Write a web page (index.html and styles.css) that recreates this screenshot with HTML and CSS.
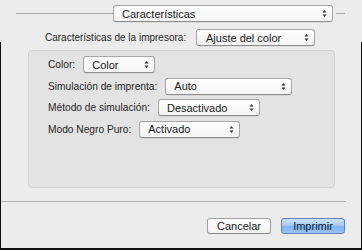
FILE: index.html
```html
<!DOCTYPE html>
<html lang="es">
<head>
<meta charset="utf-8">
<link rel="stylesheet" href="styles.css">
</head>
<body>
<div class="window">
  <div class="top-row">
    <span class="rule rule-left"></span>
    <div class="popup popup-main"><span class="ptext">Características</span><svg class="arrows" width="5" height="9" viewBox="0 0 5 9"><path d="M0.5 3.5 L2.5 1 L4.5 3.5 Z M0.5 5.5 L2.5 8 L4.5 5.5 Z" fill="#333"/></svg></div>
    <span class="rule rule-right"></span>
  </div>
  <div class="printer-row">
    <span class="label">Características de la impresora:</span>
    <div class="popup popup-printer"><span class="ptext">Ajuste del color</span><svg class="arrows" width="5" height="9" viewBox="0 0 5 9"><path d="M0.5 3.5 L2.5 1 L4.5 3.5 Z M0.5 5.5 L2.5 8 L4.5 5.5 Z" fill="#333"/></svg></div>
  </div>
  <div class="group">
    <div class="row">
      <span class="label">Color:</span>
      <div class="popup w-color"><span class="ptext">Color</span><svg class="arrows" width="5" height="9" viewBox="0 0 5 9"><path d="M0.5 3.5 L2.5 1 L4.5 3.5 Z M0.5 5.5 L2.5 8 L4.5 5.5 Z" fill="#333"/></svg></div>
    </div>
    <div class="row">
      <span class="label">Simulación de imprenta:</span>
      <div class="popup w-auto"><span class="ptext">Auto</span><svg class="arrows" width="5" height="9" viewBox="0 0 5 9"><path d="M0.5 3.5 L2.5 1 L4.5 3.5 Z M0.5 5.5 L2.5 8 L4.5 5.5 Z" fill="#333"/></svg></div>
    </div>
    <div class="row">
      <span class="label">Método de simulación:</span>
      <div class="popup w-desact"><span class="ptext">Desactivado</span><svg class="arrows" width="5" height="9" viewBox="0 0 5 9"><path d="M0.5 3.5 L2.5 1 L4.5 3.5 Z M0.5 5.5 L2.5 8 L4.5 5.5 Z" fill="#333"/></svg></div>
    </div>
    <div class="row">
      <span class="label">Modo Negro Puro:</span>
      <div class="popup w-activ"><span class="ptext">Activado</span><svg class="arrows" width="5" height="9" viewBox="0 0 5 9"><path d="M0.5 3.5 L2.5 1 L4.5 3.5 Z M0.5 5.5 L2.5 8 L4.5 5.5 Z" fill="#333"/></svg></div>
    </div>
  </div>
  <div class="separator"></div>
  <div class="buttons">
    <button class="btn">Cancelar</button>
    <button class="btn btn-default">Imprimir</button>
  </div>
</div>
</body>
</html>
```
FILE: styles.css
```css
html, body {
  margin: 0;
  padding: 0;
  background: #ececec;
}
body {
  width: 362px;
  height: 250px;
  overflow: hidden;
  font-family: "Liberation Sans", Arial, sans-serif;
  font-size: 10px;
  color: #222;
}
.window {
  position: relative;
  width: 362px;
  height: 250px;
  box-sizing: border-box;
  padding-top: 5px;
}
.window::after {
  content: "";
  position: absolute;
  left: 0;
  right: 0;
  top: 42px;
  bottom: 0;
  border-left: 1px solid #111;
  border-right: 1px solid #111;
  border-bottom: 2px solid #111;
  pointer-events: none;
}
.top-row {
  display: flex;
  align-items: center;
  height: 17px;
}
.rule {
  height: 1px;
  background: #a9a9a9;
}
.rule-left {
  margin-left: 16px;
  width: 97px;
}
.rule-right {
  margin-left: 3px;
  width: 9px;
}
.popup {
  box-sizing: border-box;
  height: 17px;
  display: flex;
  align-items: center;
  justify-content: space-between;
  padding: 0 5px 0 8px;
  background: linear-gradient(#ffffff, #f4f4f4);
  border: 1px solid #a6a6a6;
  border-bottom-color: #8e8e8e;
  border-radius: 3px;
  box-shadow: 0 0.5px 0.5px rgba(0,0,0,0.12);
  font-size: 11px;
  color: #1a1a1a;
}
.ptext {
  white-space: nowrap;
}
.arrows {
  flex: none;
}
.popup-main {
  width: 220px;
}
.printer-row {
  display: flex;
  align-items: center;
  margin-top: 7px;
  height: 17px;
}
.printer-row .label {
  margin-left: 45px;
  width: 151px;
}
.popup-printer {
  width: 119px;
  padding-left: 9px;
}
.label {
  white-space: nowrap;
  color: #262626;
}
.group {
  box-sizing: border-box;
  margin: 4px 0 0 28px;
  width: 307px;
  height: 138px;
  background: #e3e3e3;
  border: 1px solid #d2d2d2;
  border-radius: 4px;
  padding: 5px 0 0 19px;
  display: flex;
  flex-direction: column;
  gap: 4.5px;
}
.row {
  display: flex;
  align-items: center;
  height: 17px;
}
.row .label {
  font-size: 10.2px;
  margin-right: 8px;
}
.w-color { width: 72px; }
.w-auto { width: 127px; }
.w-desact { width: 102px; }
.w-activ { width: 101px; }
.separator {
  margin-top: 13px;
  width: 346px;
  height: 1px;
  background: #b0b0b0;
}
.buttons {
  display: flex;
  justify-content: flex-end;
  gap: 10px;
  margin-top: 16px;
  padding-right: 17px;
}
.btn {
  box-sizing: border-box;
  width: 64px;
  height: 16px;
  padding: 0;
  font-family: "Liberation Sans", Arial, sans-serif;
  font-size: 11px;
  color: #1a1a1a;
  background: linear-gradient(#ffffff, #f2f2f2);
  border: 1px solid #a0a0a0;
  border-bottom-color: #8a8a8a;
  border-radius: 3px;
  line-height: 14px;
}
.btn-default {
  background: linear-gradient(#cfe3fb, #a6cbf6 45%, #7fb3f0 55%, #9cc6f5);
  border-color: #5b81bc;
  color: #10203a;
}
```
